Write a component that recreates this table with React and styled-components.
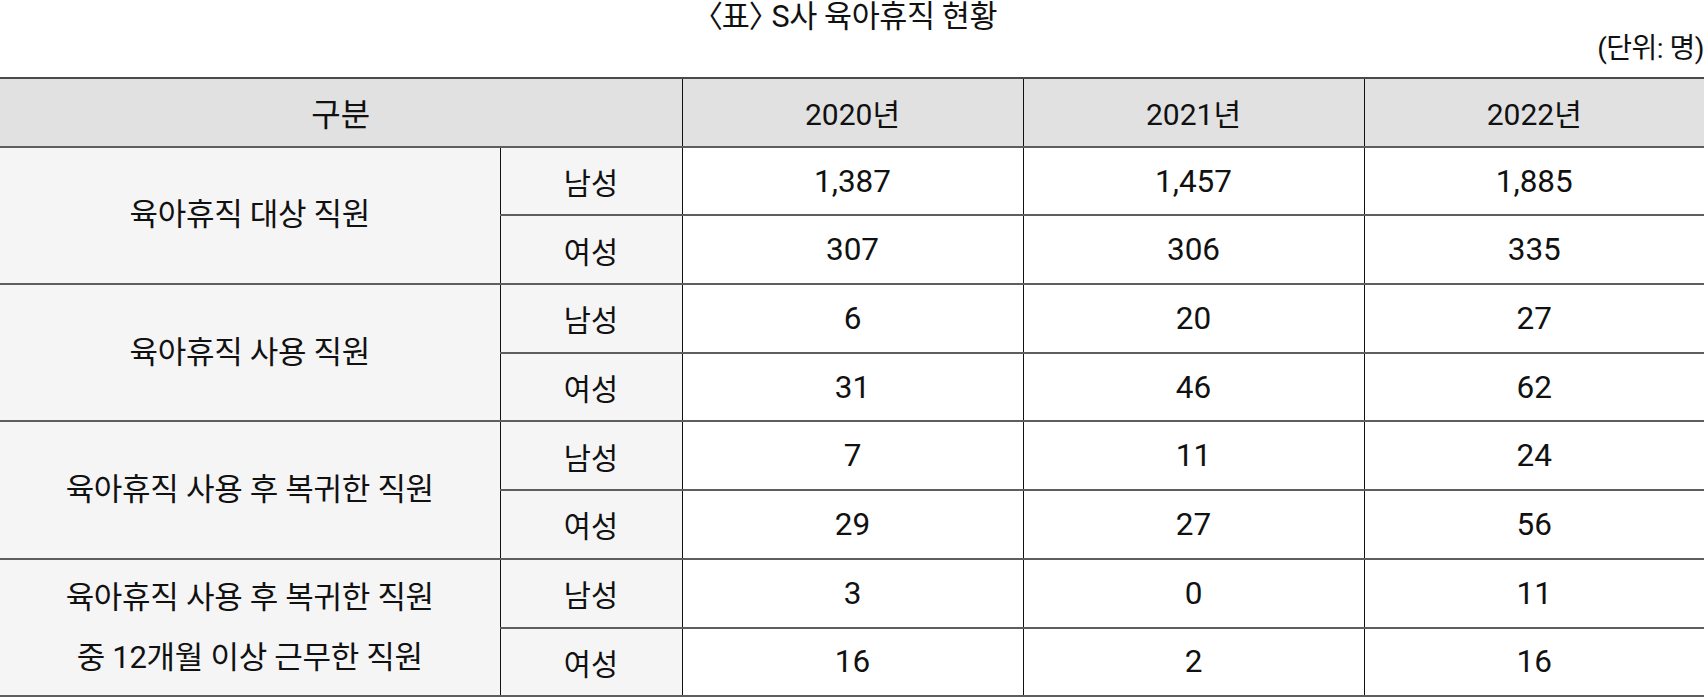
import React from "react";
import styled, { createGlobalStyle } from "styled-components";

const GlobalStyle = createGlobalStyle`
  html, body {
    margin: 0;
    padding: 0;
    background: #ffffff;
  }
  body {
    font-family: Roboto, "Noto Sans CJK KR", sans-serif;
    color: #111111;
  }
`;

const Page = styled.div`
  width: 1704px;
  overflow: hidden;
`;

const Title = styled.h1`
  margin: 0;
  height: 34px;
  line-height: 34px;
  text-align: center;
  font-size: 30.5px;
  font-weight: 400;
  letter-spacing: -0.4px;
  font-feature-settings: "palt";
`;

const Unit = styled.div`
  height: 26px;
  line-height: 26px;
  padding-top: 2px;
  margin-bottom: 15px;
  text-align: right;
  font-size: 28px;
  letter-spacing: -0.5px;
`;

const Table = styled.table`
  width: 1704px;
  table-layout: fixed;
  border-collapse: collapse;
  border-top: 2px solid #4a4a4a;
  border-bottom: 2px solid #4a4a4a;
`;

const Row = styled.tr`
  height: 68.7px;
`;

const cellBase = `
  padding: 0;
  text-align: center;
  vertical-align: middle;
  border-bottom: 2px solid #5e5e5e;
  border-right: 1px solid #111111;
  &:last-child {
    border-right: none;
  }
`;

const HeadCell = styled.th`
  ${cellBase}
  background: #e1e1e1;
  font-weight: 400;
  font-size: ${(p) => (p.$year ? "30px" : "32px")};
`;

const LabelCell = styled.td`
  ${cellBase}
  background: #f5f5f5;
  font-size: 31px;
  line-height: 60px;
  letter-spacing: -0.3px;
`;

const GenderCell = styled.td`
  ${cellBase}
  background: #f5f5f5;
  font-size: 29.5px;
`;

const NumCell = styled.td`
  ${cellBase}
  background: #ffffff;
  font-family: Roboto, "Noto Sans CJK KR", sans-serif;
  font-size: 31.5px;
`;

const groups = [
  { label: ["육아휴직 대상 직원"], male: ["1,387", "1,457", "1,885"], female: ["307", "306", "335"] },
  { label: ["육아휴직 사용 직원"], male: ["6", "20", "27"], female: ["31", "46", "62"] },
  { label: ["육아휴직 사용 후 복귀한 직원"], male: ["7", "11", "24"], female: ["29", "27", "56"] },
  {
    label: ["육아휴직 사용 후 복귀한 직원", "중 12개월 이상 근무한 직원"],
    male: ["3", "0", "11"],
    female: ["16", "2", "16"],
  },
];

export default function App() {
  return (
    <Page>
      <GlobalStyle />
      <Title>〈표〉 S사 육아휴직 현황</Title>
      <Unit>(단위: 명)</Unit>
      <Table>
        <colgroup>
          <col style={{ width: 500 }} />
          <col style={{ width: 182 }} />
          <col style={{ width: 341 }} />
          <col style={{ width: 341 }} />
          <col style={{ width: 340 }} />
        </colgroup>
        <thead>
          <Row>
            <HeadCell colSpan={2}>구분</HeadCell>
            <HeadCell $year>2020년</HeadCell>
            <HeadCell $year>2021년</HeadCell>
            <HeadCell $year>2022년</HeadCell>
          </Row>
        </thead>
        <tbody>
          {groups.map((g, i) => (
            <React.Fragment key={i}>
              <Row>
                <LabelCell rowSpan={2}>
                  {g.label.map((l, j) => (
                    <div key={j}>{l}</div>
                  ))}
                </LabelCell>
                <GenderCell>남성</GenderCell>
                {g.male.map((v, j) => (
                  <NumCell key={j}>{v}</NumCell>
                ))}
              </Row>
              <Row>
                <GenderCell>여성</GenderCell>
                {g.female.map((v, j) => (
                  <NumCell key={j}>{v}</NumCell>
                ))}
              </Row>
            </React.Fragment>
          ))}
        </tbody>
      </Table>
    </Page>
  );
}
